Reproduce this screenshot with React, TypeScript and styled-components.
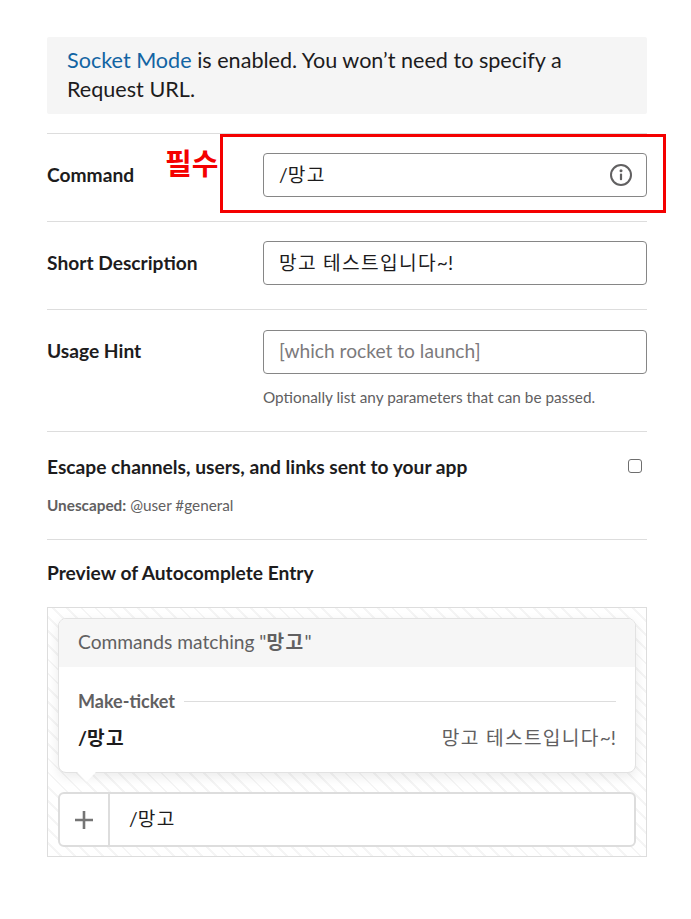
import React from "react";
import styled, { createGlobalStyle } from "styled-components";

const Global = createGlobalStyle`
  html, body { margin: 0; padding: 0; background: #fff; }
  body { font-family: Lato, "Noto Sans CJK KR", sans-serif; color: #1d1c1d; }
`;
const Page = styled.div`
  position: relative;
  width: 600px;
  height: 919px;
  box-sizing: border-box;
  margin-left: 47px;
  padding-top: 37px;
`;
const Ko = styled.span`
  letter-spacing: 1.3px;
`;
const Callout = styled.div`
  background: #f5f5f5;
  border-radius: 2px;
  padding: 9px 19px 10px 20px;
  height: 77px;
  box-sizing: border-box;
  font-size: 21.6px;
  line-height: 29px;
  margin-bottom: 19px;
`;
const Link = styled.a`
  color: #1264a3;
`;
const Row = styled.div<{ $top?: number; $bottom?: number }>`
  display: grid;
  grid-template-columns: 216px 384px;
  border-top: 1px solid #dddddd;
  padding: ${(p) => p.$top ?? 19}px 0 ${(p) => p.$bottom ?? 24}px;
`;
const Label = styled.label<{ $lift?: boolean }>`
  font-size: 19.2px;
  font-weight: 700;
  line-height: ${(p) => (p.$lift ? 42 : 44)}px;
`;
const InputWrap = styled.div<{ $latinOnly?: boolean }>`
  position: relative;
  height: 44px;
  box-sizing: border-box;
  border: 1px solid #868686;
  border-radius: 4px;
  background: #fff;
  padding: 0 15px;
  font-size: 19.2px;
  line-height: ${(p) => (p.$latinOnly ? 39 : 41)}px;
  color: #1d1c1d;
`;
const Placeholder = styled.span`
  color: #7c7a7c;
`;
const InfoIcon = styled.svg`
  position: absolute;
  right: 13px;
  top: 9px;
  width: 24px;
  height: 24px;
`;
const Hint = styled.div`
  font-size: 15.3px;
  line-height: 20px;
  color: #616061;
  margin-top: 13px;
`;
const Toggle = styled.div`
  border-top: 1px solid #dddddd;
  padding-top: 22px;
  height: 108px;
  box-sizing: border-box;
`;
const ToggleHead = styled.div`
  display: flex;
  justify-content: space-between;
  align-items: flex-start;
  font-size: 19.2px;
  font-weight: 700;
  line-height: 26px;
`;
const Box = styled.span`
  width: 12px;
  height: 12px;
  margin: 5px 5px 0 0;
  border: 1px solid #6e6e6e;
  border-radius: 3px;
  background: #fff;
`;
const Small = styled.div`
  font-size: 15.3px;
  line-height: 20px;
  color: #616061;
  margin-top: 15px;
  b { font-weight: 700; }
`;
const PreviewSection = styled.div`
  border-top: 1px solid #dddddd;
  padding-top: 20px;
`;
const PreviewTitle = styled.div`
  font-size: 19.2px;
  font-weight: 700;
  line-height: 26px;
  margin-bottom: 21px;
`;
const Preview = styled.div`
  height: 250px;
  box-sizing: border-box;
  border: 1px solid #dddddd;
  padding: 10px;
  background: repeating-linear-gradient(45deg, #ffffff 0 8px, #f5f5f5 8px 10px);
`;
const Popover = styled.div`
  position: relative;
  height: 155px;
  box-sizing: border-box;
  background: #fff;
  border: 1px solid #e2e2e2;
  border-radius: 8px;
  box-shadow: 0 4px 12px rgba(0, 0, 0, 0.08);
  &::after {
    content: "";
    position: absolute;
    left: 21px;
    bottom: -7px;
    width: 13px;
    height: 13px;
    background: #fff;
    transform: rotate(45deg);
  }
`;
const PopHeader = styled.div`
  height: 48px;
  background: #f6f6f6;
  border-radius: 7px 7px 0 0;
  padding: 0 19px;
  font-size: 19.2px;
  line-height: 46px;
  color: #616061;
  b { font-weight: 700; }
`;
const Group = styled.div`
  display: flex;
  align-items: center;
  gap: 9px;
  margin: 21px 19px 0;
  font-size: 18px;
  font-weight: 700;
  line-height: 26px;
  color: #616061;
  &::after {
    content: "";
    flex: 1;
    border-top: 1px solid #dddddd;
  }
`;
const Match = styled.div`
  display: flex;
  justify-content: space-between;
  align-items: center;
  margin: 11px 19px 0;
  font-size: 19.2px;
  line-height: 26px;
`;
const MatchName = styled.span`
  font-weight: 700;
`;
const MatchDesc = styled.span`
  color: #616061;
`;
const Composer = styled.div`
  display: flex;
  height: 55px;
  box-sizing: border-box;
  margin-top: 19px;
  background: #fff;
  border: 2px solid #dddddd;
  border-radius: 6px;
`;
const Plus = styled.div`
  width: 50px;
  flex: none;
  box-sizing: border-box;
  border-right: 2px solid #dddddd;
  display: flex;
  align-items: center;
  justify-content: center;
  svg { width: 18px; height: 18px; }
`;
const ComposerText = styled.div`
  padding-left: 19px;
  font-size: 19.2px;
  line-height: 49px;
`;
const RedBox = styled.div`
  position: absolute;
  left: 173px;
  top: 134px;
  width: 446px;
  height: 79px;
  box-sizing: border-box;
  border: 3px solid #f40000;
`;
const Required = styled.div`
  position: absolute;
  left: 118px;
  top: 143px;
  font-family: "Noto Sans CJK KR", sans-serif;
  font-size: 29px;
  font-weight: 700;
  line-height: 38px;
  color: #f40000;
`;

export default function App() {
  return (
    <Page>
      <Global />
      <Callout>
        <Link>Socket Mode</Link> is enabled. You won’t need to specify a Request URL.
      </Callout>
      <Row>
        <Label>Command</Label>
        <InputWrap>
          /<Ko>망고</Ko>
          <InfoIcon viewBox="0 0 24 24" fill="none">
            <circle cx="12" cy="12" r="10" stroke="#616061" strokeWidth="2" />
            <circle cx="12" cy="7.8" r="1.5" fill="#616061" />
            <rect x="10.9" y="10.6" width="2.2" height="6.6" rx="1" fill="#616061" />
          </InfoIcon>
        </InputWrap>
      </Row>
      <Row>
        <Label>Short Description</Label>
        <InputWrap>
          <Ko>망고 테스트입니다</Ko>~!
        </InputWrap>
      </Row>
      <Row $top={20} $bottom={24}>
        <Label $lift>Usage Hint</Label>
        <div>
          <InputWrap $latinOnly>
            <Placeholder>[which rocket to launch]</Placeholder>
          </InputWrap>
          <Hint>Optionally list any parameters that can be passed.</Hint>
        </div>
      </Row>
      <Toggle>
        <ToggleHead>
          <span>Escape channels, users, and links sent to your app</span>
          <Box />
        </ToggleHead>
        <Small>
          <b>Unescaped:</b> @user #general
        </Small>
      </Toggle>
      <PreviewSection>
        <PreviewTitle>Preview of Autocomplete Entry</PreviewTitle>
        <Preview>
          <Popover>
            <PopHeader>
              Commands matching "<b><Ko>망고</Ko></b>"
            </PopHeader>
            <Group>Make-ticket</Group>
            <Match>
              <MatchName>
                /<Ko>망고</Ko>
              </MatchName>
              <MatchDesc>
                <Ko>망고 테스트입니다</Ko>~!
              </MatchDesc>
            </Match>
          </Popover>
          <Composer>
            <Plus>
              <svg viewBox="0 0 18 18" fill="none">
                <path d="M9 0v18M0 9h18" stroke="#757575" strokeWidth="2.6" />
              </svg>
            </Plus>
            <ComposerText>
              /<Ko>망고</Ko>
            </ComposerText>
          </Composer>
        </Preview>
      </PreviewSection>
      <RedBox />
      <Required>필수</Required>
    </Page>
  );
}
